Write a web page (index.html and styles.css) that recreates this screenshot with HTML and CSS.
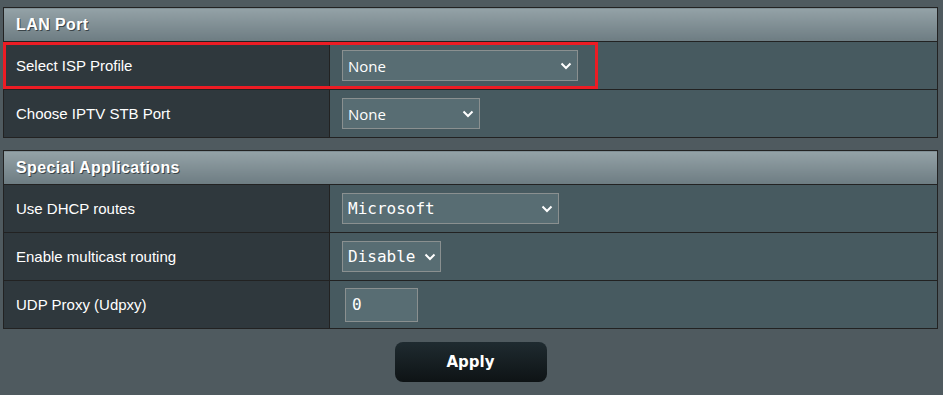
FILE: index.html
```html
<!DOCTYPE html>
<html lang="en">
<head>
    <meta charset="UTF-8">
    <title>IPTV</title>
    <link rel="stylesheet" href="styles.css">
</head>
<body>
    <div class="page">
        <div class="section">
            <table class="form-table">
                <thead>
                    <tr><th colspan="2">LAN Port</th></tr>
                </thead>
                <tbody>
                    <tr>
                        <th>Select ISP Profile</th>
                        <td>
                            <span class="select-wrap wide">
                                <select class="input-select"><option>None</option></select>
                                <svg class="chevron" width="12" height="8" viewBox="0 0 12 8"><path d="M1.5 1.5 L6 6 L10.5 1.5" fill="none" stroke="#fff" stroke-width="2"/></svg>
                            </span>
                        </td>
                    </tr>
                    <tr>
                        <th>Choose IPTV STB Port</th>
                        <td>
                            <span class="select-wrap narrow">
                                <select class="input-select"><option>None</option></select>
                                <svg class="chevron" width="12" height="8" viewBox="0 0 12 8"><path d="M1.5 1.5 L6 6 L10.5 1.5" fill="none" stroke="#fff" stroke-width="2"/></svg>
                            </span>
                        </td>
                    </tr>
                </tbody>
            </table>
            <!-- highlight box over the ISP profile row -->
            <div class="highlight"></div>
        </div>

        <div class="section">
            <table class="form-table">
                <thead>
                    <tr><th colspan="2">Special Applications</th></tr>
                </thead>
                <tbody>
                    <tr>
                        <th>Use DHCP routes</th>
                        <td>
                            <span class="select-wrap routes">
                                <select class="input-select mono"><option>Microsoft</option></select>
                                <svg class="chevron" width="12" height="8" viewBox="0 0 12 8"><path d="M1.5 1.5 L6 6 L10.5 1.5" fill="none" stroke="#fff" stroke-width="2"/></svg>
                            </span>
                        </td>
                    </tr>
                    <tr>
                        <th>Enable multicast routing</th>
                        <td>
                            <span class="select-wrap small">
                                <select class="input-select mono"><option>Disable</option></select>
                                <svg class="chevron tight" width="12" height="8" viewBox="0 0 12 8"><path d="M1.5 1.5 L6 6 L10.5 1.5" fill="none" stroke="#fff" stroke-width="2"/></svg>
                            </span>
                        </td>
                    </tr>
                    <tr>
                        <th>UDP Proxy (Udpxy)</th>
                        <td><input class="input-text mono" type="text" value="0"></td>
                    </tr>
                </tbody>
            </table>
        </div>

        <div class="apply-row">
            <button class="button-apply">Apply</button>
        </div>
    </div>
</body>
</html>
```

FILE: styles.css
```css
html, body {
    margin: 0;
    padding: 0;
    background-color: #4f5a5f;
    font-family: "Liberation Sans", Arial, sans-serif;
    color: #fff;
}
.page {
    width: 935px;
    padding: 7px 5px 0 3px;
}
.section {
    position: relative;
    margin-bottom: 12px;
}
.form-table {
    width: 100%;
    border-collapse: collapse;
    border: 1px solid #222;
    font-size: 15px;
}
.form-table thead th {
    height: 33px;
    padding: 0 0 0 12px;
    text-align: left;
    font-weight: bold;
    font-size: 16px;
    letter-spacing: 0.4px;
    color: #fff;
    text-shadow: 1px 1px 0 #3a4449;
    background: linear-gradient(to bottom, #94a2a7 0%, #6d7c82 100%);
    border-bottom: 1px solid #222;
}
.form-table tbody th {
    width: 313px;
    height: 47px;
    padding: 0 0 0 12px;
    text-align: left;
    font-weight: normal;
    background-color: #2f383d;
    border-right: 1px solid #222;
    border-bottom: 1px solid #222;
}
.form-table tbody td {
    height: 47px;
    padding: 0 0 0 12px;
    background-color: #475a60;
    border-bottom: 1px solid #222;
}
.select-wrap {
    position: relative;
    display: inline-block;
    vertical-align: middle;
}
.select-wrap.wide { width: 236px; }
.select-wrap.narrow { width: 138px; }
.select-wrap.routes { width: 217px; }
.select-wrap.small { width: 99px; }
.input-select {
    -webkit-appearance: none;
    appearance: none;
    display: block;
    width: 100%;
    height: 31px;
    margin: 0;
    padding: 0 0 0 5px;
    border: 1px solid #8a9090;
    border-radius: 0;
    background-color: #586d73;
    color: #fff;
    font-family: "Open Sans", sans-serif;
    font-size: 15px;
    outline: none;
}
.mono {
    font-family: "DejaVu Sans Mono", monospace;
    font-size: 16px;
}
.chevron {
    position: absolute;
    right: 6px;
    top: 12px;
    pointer-events: none;
}
.chevron.tight {
    right: 5px;
}
.input-text {
    box-sizing: border-box;
    width: 73px;
    height: 34px;
    margin: 0 0 0 3px;
    padding: 0 0 0 6px;
    border: 1px solid #8a9090;
    background-color: #586d73;
    color: #fff;
    vertical-align: middle;
    outline: none;
}
.highlight {
    position: absolute;
    left: 0;
    top: 35px;
    width: 589px;
    height: 41px;
    border: 3px solid #ed1c24;
    pointer-events: none;
}
.apply-row {
    display: flex;
    justify-content: center;
    padding-top: 1px;
}
.button-apply {
    width: 152px;
    height: 40px;
    border: none;
    border-radius: 8px;
    background: linear-gradient(to bottom, #1f2b30 0%, #0e1315 100%);
    color: #fff;
    font-family: "DejaVu Sans", sans-serif;
    font-weight: bold;
    font-size: 15px;
    cursor: pointer;
}
```
